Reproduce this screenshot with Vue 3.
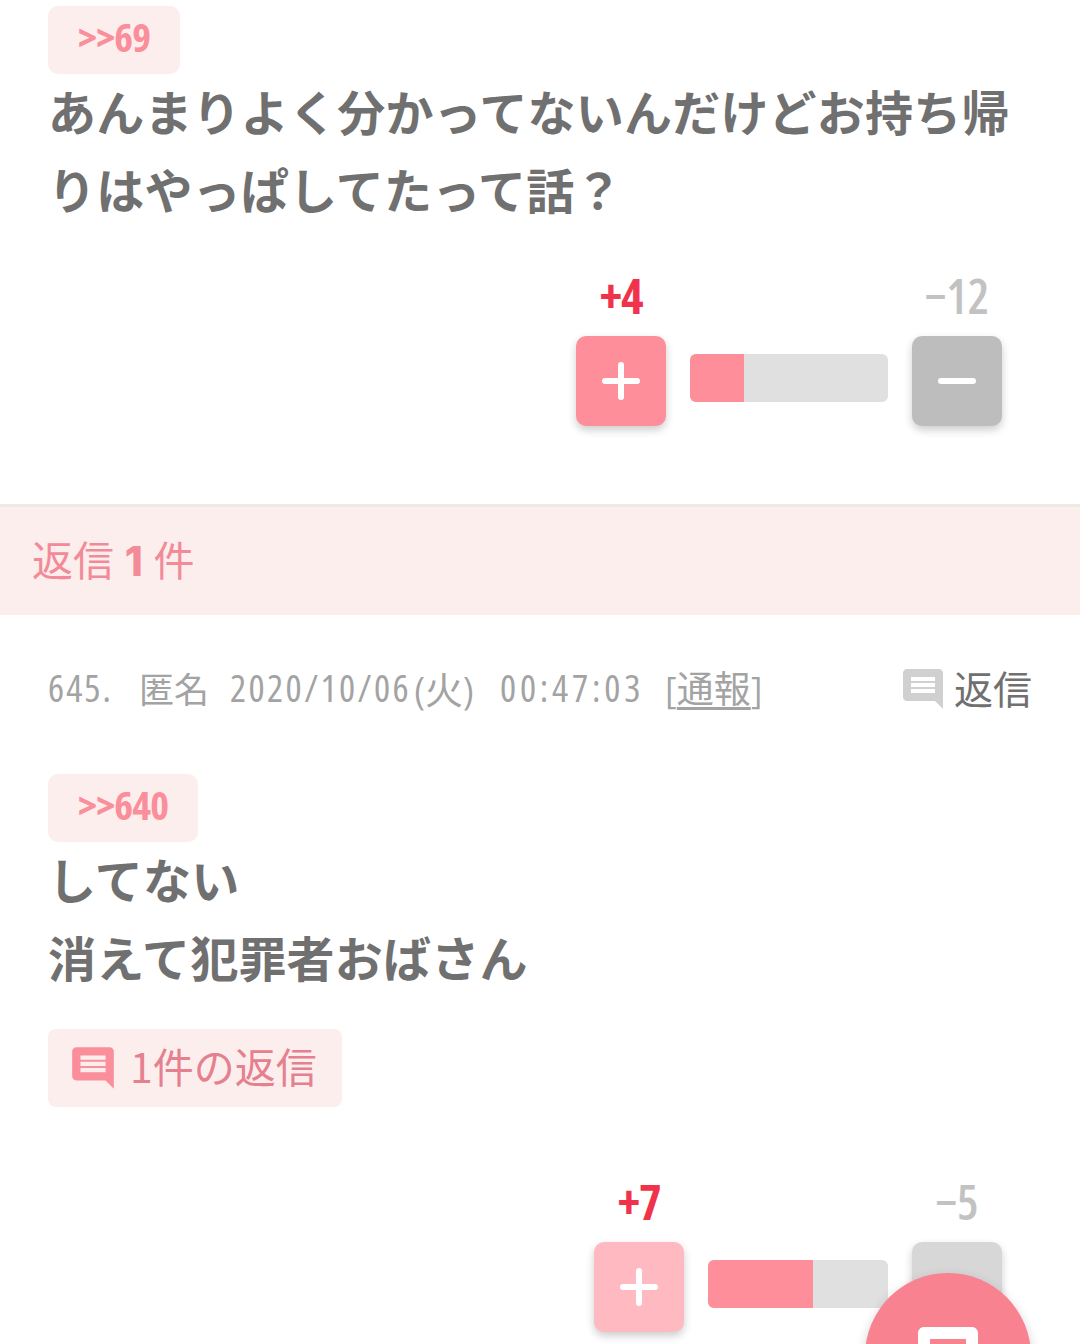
<template>
  <div class="page">
    <section class="comment first">
      <a class="anchor">&gt;&gt;69</a>
      <p class="body">あんまりよく分かってないんだけどお持ち帰りはやっぱしてたって話？</p>
      <div class="votes">
        <div class="vote">
          <span class="count plus">+{{ votes[0].up }}</span>
          <button class="vote-btn up"><span class="cross"></span></button>
        </div>
        <div class="bar" :style="{ width: votes[0].barWidth + 'px' }">
          <div class="bar-fill" :style="{ width: votes[0].fill + 'px' }"></div>
        </div>
        <div class="vote">
          <span class="count minus">−{{ votes[0].down }}</span>
          <button class="vote-btn down"><span class="dash"></span></button>
        </div>
      </div>
    </section>

    <div class="reply-band">返信 <b>1</b> 件</div>

    <section class="comment second">
      <div class="meta">
        <div class="info">
          <span class="no">645.</span>
          <span class="name">匿名</span>
          <span class="date">2020/10/06</span>
          <span class="day">(火)</span>
          <span class="time">00:47:03</span>
          <span class="report">[<u>通報</u>]</span>
        </div>
        <div class="reply-link">
          <svg class="meta-icon" viewBox="0 0 24 24"><path :d="commentIcon" /></svg>
          <span>返信</span>
        </div>
      </div>
      <a class="anchor">&gt;&gt;640</a>
      <p class="body">してない<br />消えて犯罪者おばさん</p>
      <div class="reply-chip">
        <svg class="chip-icon" viewBox="0 0 24 24"><path :d="commentIcon" /></svg>
        <span class="chip-label">1件の返信</span>
      </div>
      <div class="votes lower">
        <div class="vote">
          <span class="count plus">+{{ votes[1].up }}</span>
          <button class="vote-btn up pale"><span class="cross"></span></button>
        </div>
        <div class="bar" :style="{ width: votes[1].barWidth + 'px' }">
          <div class="bar-fill" :style="{ width: votes[1].fill + 'px' }"></div>
        </div>
        <div class="vote">
          <span class="count minus">−{{ votes[1].down }}</span>
          <button class="vote-btn down pale"></button>
        </div>
      </div>
    </section>

    <button class="fab">
      <svg viewBox="0 0 24 24"><path :d="commentIcon" /></svg>
    </button>
  </div>
</template>

<script setup>
const commentIcon = 'M21.99 4c0-1.1-.89-2-1.99-2H4c-1.1 0-2 .9-2 2v12c0 1.1.9 2 2 2h14l4 4-.01-18zM18 14H6v-2h12v2zm0-3H6V9h12v2zm0-3H6V6h12v2z'

const votes = [
  { up: 4, down: 12, barWidth: 198, fill: 54 },
  { up: 7, down: 5, barWidth: 180, fill: 105 }
]
</script>

<style>
html,
body {
  margin: 0;
  background: #fff;
}
</style>

<style scoped>
.page {
  position: relative;
  width: 1080px;
  height: 1344px;
  overflow: hidden;
  background: #fff;
  font-family: "Noto Sans CJK JP", "Liberation Sans", sans-serif;
}

.comment {
  padding: 0 48px;
}

.first {
  height: 504px;
  padding-top: 6px;
  box-sizing: border-box;
}

.second {
  padding-top: 50px;
}

.anchor {
  display: block;
  width: fit-content;
  height: 68px;
  padding: 0 30px;
  border-radius: 10px;
  background: #fdeeee;
  color: #fa8f9b;
  font-family: "Open Sans", "Noto Sans", sans-serif;
  font-stretch: 75%;
  font-size: 40px;
  font-weight: 700;
  letter-spacing: -0.8px;
  line-height: 62px;
}

.body {
  margin: -3px 0 3px;
  color: #707070;
  font-size: 48px;
  font-weight: 700;
  letter-spacing: 0.2px;
  line-height: 78px;
}

.votes {
  display: flex;
  justify-content: flex-end;
  align-items: flex-end;
  gap: 24px;
  padding-right: 30px;
  margin-top: 43px;
}

.votes.lower {
  margin-top: 69px;
}

.vote {
  display: flex;
  flex-direction: column;
  align-items: center;
  width: 90px;
}

.count {
  height: 66px;
  font-family: "Open Sans", "Noto Sans", sans-serif;
  font-stretch: 75%;
  font-size: 48px;
  line-height: 52px;
}

.plus {
  color: #f0334a;
  font-weight: 700;
  letter-spacing: -1px;
}

.minus {
  color: #c2c2c2;
  font-weight: 600;
}

.vote-btn {
  position: relative;
  display: block;
  width: 90px;
  height: 90px;
  padding: 0;
  border: none;
  border-radius: 10px;
  box-shadow: 0 4px 8px rgba(0, 0, 0, 0.2);
}

.up {
  background: #ff8e9b;
}

.up.pale {
  background: #ffb9c1;
}

.down {
  background: #bdbdbd;
}

.down.pale {
  background: #d7d7d7;
}

.cross,
.dash {
  position: absolute;
  left: 26px;
  top: 42px;
  width: 38px;
  height: 6px;
  border-radius: 3px;
  background: #fff;
}

.cross::after {
  content: "";
  position: absolute;
  left: 16px;
  top: -16px;
  width: 6px;
  height: 38px;
  border-radius: 3px;
  background: #fff;
}

.bar {
  height: 48px;
  margin-bottom: 24px;
  border-radius: 6px;
  background: #e0e0e0;
  overflow: hidden;
}

.bar-fill {
  height: 100%;
  background: #ff8e9b;
}

.reply-band {
  height: 108px;
  padding-left: 32px;
  border-top: 3px solid #eeeae8;
  background: #fdeeee;
  color: #f28b97;
  font-size: 41px;
  line-height: 102px;
}

.reply-band b {
  font-family: "Inter", sans-serif;
  font-weight: 800;
  margin: 0 1.5px;
}

.meta {
  display: flex;
  justify-content: space-between;
  align-items: center;
  height: 50px;
  margin-top: -3px;
  margin-bottom: 62px;
}

.info {
  display: flex;
  align-items: center;
  gap: 20px;
  color: #a3a3a3;
  font-family: "Open Sans", "Noto Sans CJK JP", sans-serif;
  font-stretch: 75%;
  font-size: 38px;
  white-space: nowrap;
}

.no {
  letter-spacing: 2px;
}

.name {
  margin-left: 6px;
  font-size: 35px;
  font-weight: 400;
}

.date {
  margin-left: 1px;
  letter-spacing: 2.4px;
}

.day {
  margin-left: -17px;
}

.time {
  margin-left: 6px;
  letter-spacing: 3.8px;
}

.report {
  margin-left: 1px;
  font-size: 37px;
}

.report u {
  text-underline-offset: 4px;
}

.reply-link {
  display: flex;
  align-items: center;
  gap: 7px;
  color: #707070;
  font-size: 39px;
  font-weight: 400;
}

.meta-icon {
  width: 48px;
  height: 48px;
  margin-top: 4px;
  fill: #d0d0d0;
}

.reply-chip {
  display: flex;
  align-items: center;
  gap: 12px;
  width: fit-content;
  height: 78px;
  margin-top: 34px;
  padding: 0 25px 0 20px;
  border-radius: 8px;
  background: #fdeeee;
  color: #e5808e;
  font-size: 41px;
  font-weight: 400;
}

.chip-label {
  margin-bottom: 6px;
}

.chip-icon {
  width: 50px;
  height: 50px;
  fill: #fa8f9b;
}

.fab {
  position: absolute;
  left: 865px;
  top: 1273px;
  width: 166px;
  height: 166px;
  padding: 0;
  border: none;
  border-radius: 50%;
  background: #f8828f;
  box-shadow: 0 4px 12px rgba(0, 0, 0, 0.18);
}

.fab svg {
  position: absolute;
  left: 47px;
  top: 48px;
  width: 72px;
  height: 72px;
  fill: #fff;
}
</style>
